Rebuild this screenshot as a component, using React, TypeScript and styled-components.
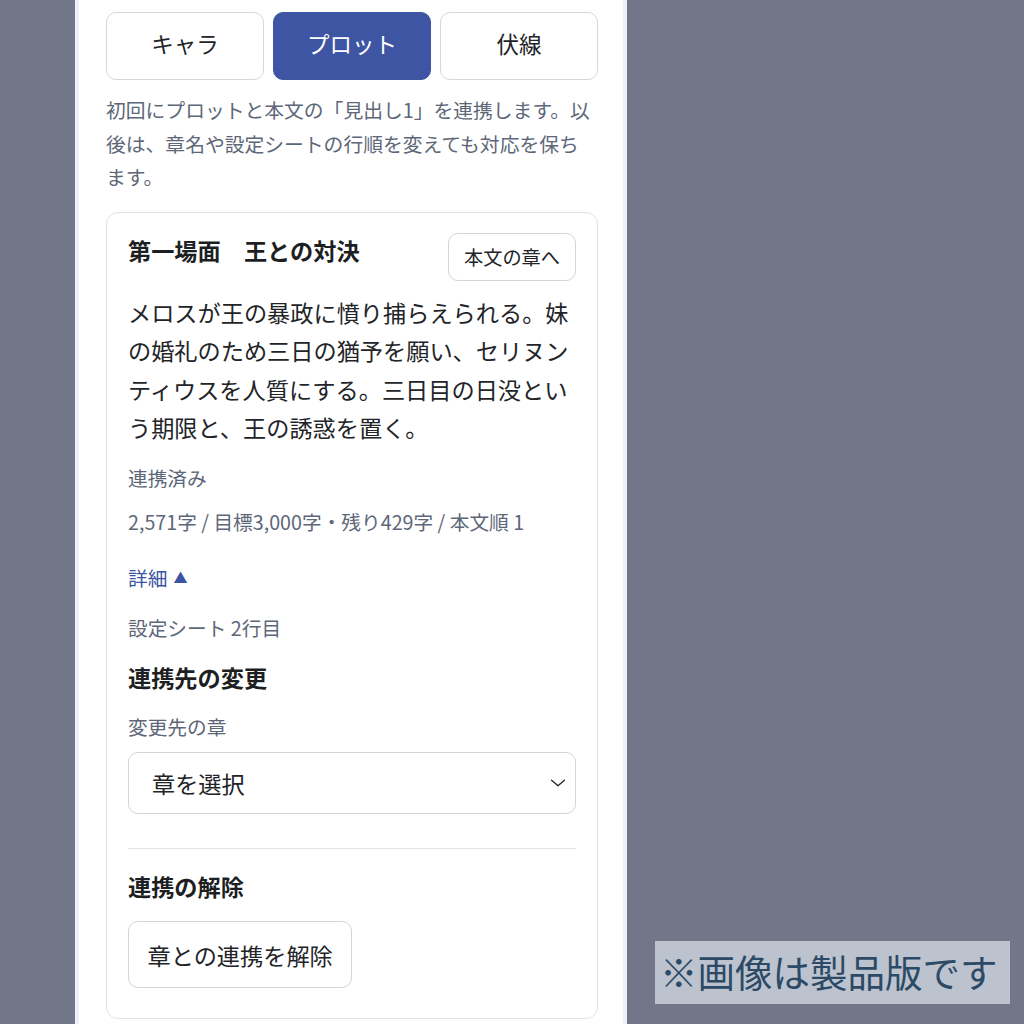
import { FC } from 'react';
import styled, { createGlobalStyle } from 'styled-components';

const GlobalStyle = createGlobalStyle`
	html, body {
		margin: 0;
		height: 100%;
		overflow: hidden;
		background: #717788;
		font-family: "Noto Sans CJK JP", "Noto Sans", sans-serif;
	}
	#root {
		height: 100%;
	}
	* {
		box-sizing: border-box;
	}
`;

const Screen = styled.div`
	position: relative;
	display: flex;
	height: 1024px;
	padding-left: 75px;
`;

const Panel = styled.main`
	width: 552px;
	height: 1024px;
	overflow: hidden;
	background: #ffffff;
	border-left: 4px solid #eef0f9;
	border-right: 4px solid #eef0f9;
	padding: 12px 25px 0 27px;
	display: flex;
	flex-direction: column;
`;

const Tabs = styled.div`
	display: grid;
	grid-template-columns: repeat(3, 1fr);
	gap: 9px;
`;

const Tab = styled.button<{ $active?: boolean }>`
	height: 68px;
	padding: 0 0 5px;
	border-radius: 10px;
	border: 1.5px solid ${({ $active }) => ($active ? '#3d55a2' : '#d4d8df')};
	background: ${({ $active }) => ($active ? '#3d55a2' : '#ffffff')};
	color: ${({ $active }) => ($active ? '#ffffff' : '#222428')};
	font-family: inherit;
	font-size: 22.5px;
	line-height: 1;
	cursor: pointer;
`;

const Hint = styled.p`
	margin: 13px 0 0;
	font-size: 19.8px;
	line-height: 33.5px;
	color: #5d6779;
`;

const Card = styled.section`
	margin-top: 18px;
	border: 1.5px solid #dfe2e8;
	border-radius: 12px;
	padding: 20px 21px 30px;
	display: flex;
	flex-direction: column;
`;

const CardHeader = styled.div`
	display: flex;
	justify-content: space-between;
	align-items: flex-start;
`;

const SceneTitle = styled.h2`
	margin: 0;
	font-size: 23.2px;
	line-height: 35px;
	font-weight: 700;
	color: #1d1f23;
`;

const OutlineButton = styled.button<{ $size?: 'sm' | 'lg' }>`
	height: ${({ $size }) => ($size === 'lg' ? '67px' : '48px')};
	padding: ${({ $size }) => ($size === 'lg' ? '0 18.5px' : '0 15px')};
	border: 1.5px solid #d0d5dc;
	border-radius: 10px;
	background: #ffffff;
	color: #222428;
	font-family: inherit;
	font-size: ${({ $size }) => ($size === 'lg' ? '23.2px' : '19.2px')};
	white-space: nowrap;
	cursor: pointer;
`;

const Synopsis = styled.p`
	margin: 12px 0 0;
	font-size: 23.2px;
	line-height: 38.5px;
	color: #222428;
`;

const Meta = styled.div<{ $gap: number; $tone?: 'link' }>`
	margin-top: ${({ $gap }) => $gap}px;
	font-size: 19.7px;
	line-height: 29px;
	color: ${({ $tone }) => ($tone === 'link' ? '#3b55a3' : '#5d6779')};
	display: flex;
	align-items: center;
	gap: 6px;
`;

const Caret = styled.span`
	font-size: 14px;
	line-height: 1;
`;

const SectionTitle = styled.h3<{ $gap: number }>`
	margin: ${({ $gap }) => $gap}px 0 0;
	font-size: 23.2px;
	line-height: 35px;
	font-weight: 700;
	color: #1d1f23;
`;

const SelectWrap = styled.div`
	position: relative;
	margin-top: 11.5px;
`;

const Select = styled.select`
	width: 100%;
	height: 62px;
	appearance: none;
	border: 1.5px solid #d0d5dc;
	border-radius: 10px;
	background: #ffffff;
	padding: 0 48px 0 23px;
	font-family: inherit;
	font-size: 23.2px;
	color: #222428;
`;

const Chevron = styled.svg`
	position: absolute;
	right: 7px;
	top: 50%;
	transform: translateY(-50%);
	pointer-events: none;
`;

const Divider = styled.hr`
	margin: 34px 0 0;
	border: none;
	border-top: 1.5px solid #dfe2e8;
`;

const Actions = styled.div`
	margin-top: 17.5px;
	display: flex;
`;

const Notice = styled.div`
	position: absolute;
	left: 655px;
	top: 941px;
	width: 355px;
	height: 63px;
	background: #bcc3cf;
	color: #2c4a66;
	font-size: 37.5px;
	line-height: 60px;
	padding-left: 5px;
	white-space: nowrap;
	overflow: hidden;
`;

const App: FC = () => {
	return (
		<>
			<GlobalStyle />
			<Screen>
				<Panel>
					<Tabs>
						<Tab>キャラ</Tab>
						<Tab $active>プロット</Tab>
						<Tab>伏線</Tab>
					</Tabs>
					<Hint>
						初回にプロットと本文の「見出し1」を連携します。以後は、章名や設定シートの行順を変えても対応を保ちます。
					</Hint>

					<Card>
						<CardHeader>
							<SceneTitle>第一場面　王との対決</SceneTitle>
							<OutlineButton>本文の章へ</OutlineButton>
						</CardHeader>
						<Synopsis>
							メロスが王の暴政に憤り捕らえられる。妹の婚礼のため三日の猶予を願い、セリヌンティウスを人質にする。三日目の日没という期限と、王の誘惑を置く。
						</Synopsis>

						<Meta $gap={16}>連携済み</Meta>
						<Meta $gap={15}>2,571字 / 目標3,000字・残り429字 / 本文順 1</Meta>
						<Meta $gap={27} $tone="link">
							詳細 <Caret>▲</Caret>
						</Meta>
						<Meta $gap={21}>設定シート 2行目</Meta>

						<SectionTitle $gap={18}>連携先の変更</SectionTitle>
						<Meta $gap={17}>変更先の章</Meta>
						<SelectWrap>
							<Select defaultValue="">
								<option value="">章を選択</option>
							</Select>
							<Chevron width="22" height="22" viewBox="0 0 24 24" fill="none" stroke="#2a2c30" strokeWidth="1.6" strokeLinecap="round" strokeLinejoin="round">
								<path d="M5 9l7 6 7-6" />
							</Chevron>
						</SelectWrap>

						<Divider />

						<SectionTitle $gap={19.5}>連携の解除</SectionTitle>
						<Actions>
							<OutlineButton $size="lg">章との連携を解除</OutlineButton>
						</Actions>
					</Card>
				</Panel>
				<Notice>※画像は製品版です</Notice>
			</Screen>
		</>
	);
};

export default App;
